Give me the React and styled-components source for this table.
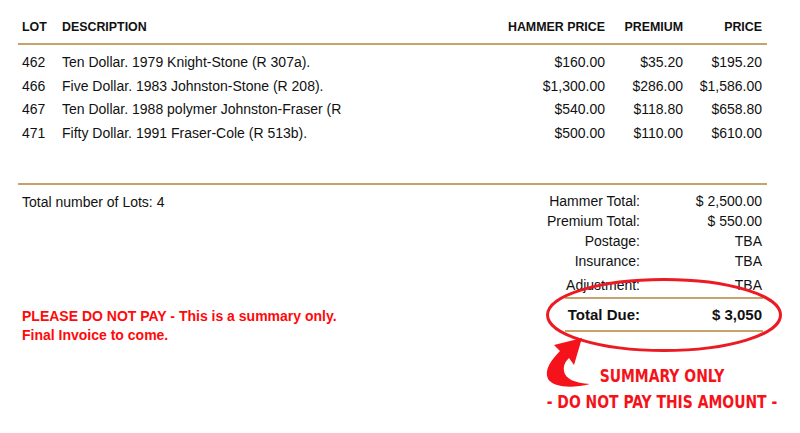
import React from "react";
import styled, { createGlobalStyle } from "styled-components";

const tan = "#c4a46c";
const ink = "#111";
const red = "#f5121a";

const Global = createGlobalStyle`
  body {
    margin: 0;
    background: #fff;
    font-family: "Liberation Sans", Arial, sans-serif;
    color: ${ink};
  }
`;

const Page = styled.div`
  width: 800px;
  height: 433px;
  box-sizing: border-box;
  padding: 19px 33px 0 18px;
  overflow: hidden;
`;

const Grid = styled.div`
  display: grid;
  grid-template-columns: 40px 282px 1fr 90px 78px 79px;
  padding: 0 5px 0 4px;
`;

const HeadRow = styled(Grid)`
  font-size: 12.4px;
  font-weight: 700;
  line-height: 16px;
  padding-bottom: 8px;
  border-bottom: 2px solid ${tan};
`;

const Rows = styled.div`
  padding: 6px 0 38px;
  border-bottom: 2px solid ${tan};
`;

const Row = styled(Grid)`
  font-size: 14px;
  line-height: 23.6px;
`;

const Cell = styled.div`
  text-align: ${p => (p.$right ? "right" : "left")};
  white-space: nowrap;
  overflow: ${p => (p.$clip ? "hidden" : "visible")};
  direction: ${p => (p.$right ? "rtl" : "ltr")};
`;

const Footer = styled.div`
  display: grid;
  grid-template-columns: 1fr 217px;
  padding: 7px 5px 0 4px;
  align-items: start;
`;

const Left = styled.div`
  font-size: 14px;
  line-height: 20px;
`;

const Notice = styled.p`
  margin: 95px 0 0;
  color: #ff0a0a;
  font-weight: 700;
  font-size: 14px;
  line-height: 19px;
`;

const Totals = styled.div`
  position: relative;
  font-size: 14px;
  line-height: 19.8px;
`;

const TotalRow = styled.div`
  display: grid;
  grid-template-columns: 1fr 122px;
  text-align: right;
  margin-top: ${p => (p.$gap ? "4px" : "0")};
`;

const DueRow = styled(TotalRow)`
  margin: 2px -1px 0 20px;
  padding-right: 1px;
  border-top: 2px solid ${tan};
  border-bottom: 2px solid ${tan};
  font-size: 15px;
  font-weight: 700;
  line-height: 31px;
`;

const Ring = styled.svg`
  position: absolute;
  left: 1px;
  top: 86px;
  overflow: visible;
`;

const Callout = styled.div`
  position: relative;
  width: 236px;
  margin: 18px -13px 0 auto;
  color: ${red};
  font-family: "DejaVu Sans Condensed", "Liberation Sans", sans-serif;
  font-weight: 700;
  font-size: 18px;
  line-height: 26px;
  white-space: nowrap;
`;

const Line = styled.div`
  display: flex;
  justify-content: center;
  transform: scaleX(${p => p.$squeeze});
  transform-origin: center;
`;

const Arrow = styled.svg`
  position: absolute;
  left: 0;
  top: -30px;
`;

const lots = [
  ["462", "Ten Dollar. 1979 Knight-Stone (R 307a).", "$160.00", "$35.20", "$195.20"],
  ["466", "Five Dollar. 1983 Johnston-Stone (R 208).", "$1,300.00", "$286.00", "$1,586.00"],
  ["467", "Ten Dollar. 1988 polymer Johnston-Fraser (R", "$540.00", "$118.80", "$658.80"],
  ["471", "Fifty Dollar. 1991 Fraser-Cole (R 513b).", "$500.00", "$110.00", "$610.00"],
];

const totals = [
  ["Hammer Total:", "$ 2,500.00"],
  ["Premium Total:", "$ 550.00"],
  ["Postage:", "TBA"],
  ["Insurance:", "TBA"],
];

export default function App() {
  return (
    <Page>
      <Global />
      <HeadRow>
        <Cell>LOT</Cell>
        <Cell>DESCRIPTION</Cell>
        <Cell />
        <Cell $right>HAMMER PRICE</Cell>
        <Cell $right>PREMIUM</Cell>
        <Cell $right>PRICE</Cell>
      </HeadRow>
      <Rows>
        {lots.map(l => (
          <Row key={l[0]}>
            <Cell>{l[0]}</Cell>
            <Cell $clip>{l[1]}</Cell>
            <Cell />
            <Cell $right>{l[2]}</Cell>
            <Cell $right>{l[3]}</Cell>
            <Cell $right>{l[4]}</Cell>
          </Row>
        ))}
      </Rows>
      <Footer>
        <Left>
          Total number of Lots: 4
          <Notice>
            PLEASE DO NOT PAY - This is a summary only.
            <br />
            Final Invoice to come.
          </Notice>
        </Left>
        <Totals>
          {totals.map(t => (
            <TotalRow key={t[0]}>
              <span>{t[0]}</span>
              <span>{t[1]}</span>
            </TotalRow>
          ))}
          <TotalRow $gap>
            <span>Adjustment:</span>
            <span>TBA</span>
          </TotalRow>
          <DueRow>
            <span>Total Due:</span>
            <span>$ 3,050</span>
          </DueRow>
          <Ring width="236" height="74" viewBox="0 0 236 74">
            <ellipse cx="118" cy="37" rx="116.5" ry="35.5" fill="none" stroke="#ec1a22" strokeWidth="3" />
          </Ring>
        </Totals>
      </Footer>
      <Callout>
        <Arrow width="56" height="60" viewBox="544 335 56 60">
          <path
            d="M582 340 L554 347 L560 353 C551 362 544 372 548 381 C553 389 571 391 590 386 C575 385 565 381 564 373 C563 367 566 363 569 360 L574 367 Z"
            fill={red}
          />
        </Arrow>
        <Line $squeeze={0.86}>SUMMARY ONLY</Line>
        <Line $squeeze={0.86}>- DO NOT PAY THIS AMOUNT -</Line>
      </Callout>
    </Page>
  );
}
